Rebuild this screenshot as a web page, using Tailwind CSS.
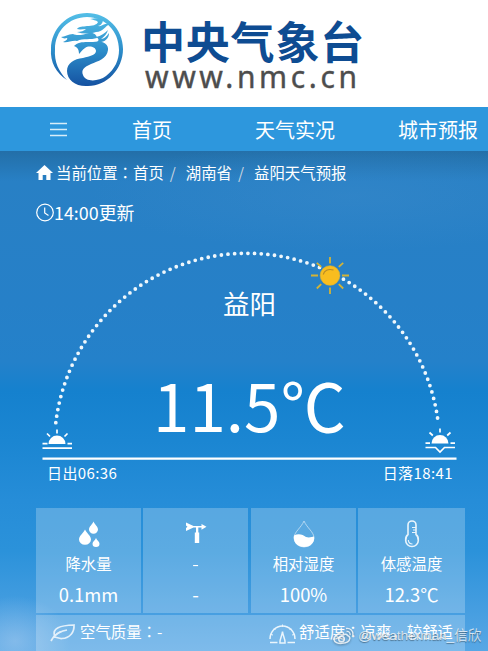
<!DOCTYPE html>
<html lang="zh-CN">
<head>
  <meta charset="UTF-8">
  <meta name="viewport" content="width=device-width, initial-scale=1.0">
  <title>益阳天气预报</title>
  <script src="https://cdn.jsdelivr.net/npm/@tailwindcss/browser@4"></script>
</head>
<body class="overflow-hidden">
  <div class="relative w-[488px] h-[651px] overflow-hidden bg-white text-white font-['Noto_Sans_CJK_SC',sans-serif]">
    <!-- Header -->
    <header class="flex h-[107px] pt-3 pl-[50px]">
      <svg class="w-[74px] h-[75px] shrink-0" viewBox="0 0 74 75">
        <defs>
          <linearGradient id="logo" gradientUnits="userSpaceOnUse" x1="0" y1="0" x2="0" y2="75">
            <stop offset="0" stop-color="#55c0e8" />
            <stop offset=".5" stop-color="#2d8fcb" />
            <stop offset="1" stop-color="#1450a0" />
          </linearGradient>
        </defs>
        <g fill="url(#logo)">
          <path d="M17 68C6 61 0 50 1 37C1 17 17 1 37 1C57 1 73 17 73 37C73 57 57 74 38 74C26 75 17 68 17 59C17 51 24 47 33 46C40 44 46 43 46 39C46 35 39 33 35 36C32 38 31 40 29 42C29 37 27 35 24 34C28 29 37 30 43 30C51 28 59 31 58 38C57 47 48 49 41 52C34 55 31 58 33 63C35 70 48 70 56 64C65 57 69 48 69 38C69 19 55 5 37 5C19 5 5 19 5 37C4 50 9 60 17 68Z" />
          <path d="M11 25C15 25 18 22 23 22C27 24 33 23 39 21C43 20 47 23 47 26C41 28 33 26 27 29C22 28 18 31 13 30C16 29 18 27 17 26C14 27 13 26 11 25Z" />
          <path d="M27 17C29 14 33 15 37 14C42 14 47 13 48 10C46 8 43 8 40 7C45 6 50 6 53 8C53 11 50 14 48 14C52 15 55 10 60 12C55 14 53 20 46 20C39 22 33 22 27 20C31 20 34 19 36 17C33 17 30 18 27 17Z" />
          <path d="M46 25C51 24 55 21 58 18C57 22 54 25 51 27C54 27 57 24 59 21C59 27 54 31 47 30C50 28 48 26 46 25Z" />
        </g>
      </svg>
      <div class="pl-[17px] pt-[5px]">
        <div class="h-11 text-[44px] leading-[46px] font-bold tracking-[0.8px] text-[#0e4c92] whitespace-nowrap">中央气象台</div>
        <div class="pt-px pl-1 font-['Noto_Sans'] text-[30px] leading-[30px] tracking-[3.6px] text-[#4d4d4d] [-webkit-text-stroke:0.4px_#4d4d4d] whitespace-nowrap">www.nmc.cn</div>
      </div>
    </header>

    <!-- Nav -->
    <nav class="flex h-11 items-center bg-[#2d97dd] pl-[50px] text-xl leading-[44px] whitespace-nowrap">
      <svg class="w-[17px] h-[15px]" viewBox="0 0 17 15" fill="none" stroke="#d8edf9" stroke-width="1.4">
        <path d="M0 1.5H17M0 7.5H17M0 13.5H17" />
      </svg>
      <a class="ml-[65px] pt-px">首页</a>
      <a class="ml-[83px] pt-px">天气实况</a>
      <a class="ml-[63px] pt-px">城市预报</a>
    </nav>

    <main class="h-[500px]">
      <div class="h-full bg-[radial-gradient(ellipse_55px_45px_at_15px_490px,#a7cbef90,transparent),radial-gradient(ellipse_260px_55px_at_350px_45px,#3a8acb70,transparent),linear-gradient(180deg,#236fa8_0%,#2880c5_6%,#2680c8_30%,#2481ca_42%,#1581ce_48%,#1b86d2_58%,#268dd8_70%,#2b92da_80%,#449de0_91%,#57a7e5_100%)] px-9">
        <!-- Breadcrumb -->
        <div class="flex h-[46px] items-center pb-0.5 text-[15.4px] whitespace-nowrap">
          <svg class="mb-px w-[17px] h-[15px]" viewBox="0 0 17 15" fill="#fff">
            <path d="M8.5 0L17 8H14.5V15H10.3V10H6.7V15H2.5V8H0Z" />
          </svg>
          <span class="ml-[3px]">当前位置<span lang="zh-TW" class="font-['Noto_Sans_CJK_TC']">：</span>首页</span>
          <span class="ml-1.5 text-[#c8d4e0]">/</span>
          <span class="ml-2.5">湖南省</span>
          <span class="ml-1.5 text-[#c8d4e0]">/</span>
          <span class="ml-2.5">益阳天气预报</span>
        </div>

        <!-- Update time -->
        <div class="flex h-8 items-center pb-px text-[17.9px] whitespace-nowrap">
          <svg class="w-[18px] h-[19px]" viewBox="0 0 18 19" fill="none" stroke="#fff" stroke-width="1.2">
            <circle cx="9" cy="9.5" r="8.3" />
            <path d="M8.7 4.5V10L12.5 12.5" />
          </svg>
          14:00更新
        </div>

        <!-- Sun track -->
        <div class="relative h-[279px]">
          <svg class="absolute -left-9 top-0 w-[488px] h-[279px]" viewBox="0 229 488 279" fill="none" stroke="#fff">
            <path d="M55.8 422.7A192.6 192.6 0 0 1 438.2 422.7" stroke="#eff7fc" stroke-width="3.8" stroke-linecap="round" stroke-dasharray="0 6.67" />
            <path d="M42.5 458.7H456.5" stroke-width="2.2" />
            <!-- Sunrise -->
            <g stroke-width="1.7">
              <path d="M48.5 444A8.5 8.5 0 0 1 65.5 444Z" fill="#fff" stroke="none" />
              <path d="M57 429.5V433.5M47 433.5L50 436.5M67.5 433.5L64.5 436.5M42.5 443.7H47.5M67.5 443.7H72M42.5 448.2H72" />
            </g>
            <!-- Sunset -->
            <g stroke-width="1.7">
              <path d="M431.5 443.5A8.5 8.5 0 0 1 448.5 443.5Z" fill="#fff" stroke="none" />
              <path d="M440 428.5V432.5M429.5 432.5L432.8 435.5M450.5 432.5L447.2 435.5M425.5 443.2H430M450.5 443.2H455M425.5 447.5H435.5L440 452L444.5 447.5H455" />
            </g>
            <!-- Sun -->
            <g stroke="#d3b336" stroke-width="1.8">
              <path d="M330 257V263.5M330 287.5V294M311 275.5H318M342 275.5H349M316.8 262.8L321.2 266.8M343.2 262.8L338.8 266.8M316.8 288.5L321.2 284.2M343.2 288.5L338.8 284.2" />
              <circle cx="330" cy="275.5" r="9.8" fill="#f8bd1f" stroke="#e0b42c" stroke-width=".6" />
              <path d="M323.3 274.5C324 270.5 328 268.5 333.5 270" stroke="#b3892a" stroke-width="1.2" />
            </g>
          </svg>
          <div class="relative flex flex-col items-center pt-[56px] pl-[11px]">
            <div class="text-[26.5px] leading-[36px]">益阳</div>
            <div class="mt-[43px] text-[65.5px] leading-[80px] whitespace-nowrap">11.5℃</div>
          </div>
          <div class="relative mt-[18px] flex w-[417px] justify-between pl-[11px] text-[15px] leading-[22px] whitespace-nowrap">
            <span class="tracking-[0.4px]">日出06:36</span>
            <span class="tracking-[0.4px]">日落18:41</span>
          </div>
        </div>

        <!-- Cards -->
        <div class="flex w-[429px] h-[105px] text-center text-[15.4px]">
          <div class="flex w-[105px] flex-col items-center bg-white/23 pt-3">
            <svg class="w-[22px] h-[28px]" viewBox="0 0 22 28" fill="#fff">
              <path d="M7 9.5C9 13.5 13 16 13 19.5A6 5.2 0 0 1 1 19.5C1 16 5 13.5 7 9.5ZM15.5 1.5C17 5 20 6.5 20 9.5A4.5 4.2 0 0 1 11 9.5C11 6.5 14 5 15.5 1.5ZM18 18C19 20.5 21.5 21.5 21.5 23.7A3.5 3.2 0 0 1 14.5 23.7C14.5 21.5 17 20.5 18 18Z" />
            </svg>
            <div class="mt-[3px] leading-6">降水量</div>
            <div class="mt-[5px] text-[18.4px] leading-7">0.1mm</div>
          </div>
          <div class="ml-0.5 flex w-[105px] flex-col items-center bg-white/23 pt-3">
            <svg class="w-[22px] h-[28px]" viewBox="0 0 22 28" fill="#fff">
              <path d="M1 2.5L8.5 6H16.5V4L21.5 6.8L16.5 9.8V7.6H8.5L1 11V8L2.5 6.8L1 5.5ZM11 7H13.3V12.5H14.2V23H9.8V12.5H11Z" />
            </svg>
            <div class="mt-[3px] leading-6 scale-x-125">-</div>
            <div class="mt-[5px] text-[19px] leading-7">-</div>
          </div>
          <div class="ml-[3px] flex w-[105px] flex-col items-center bg-white/23 pt-3">
            <svg class="w-[22px] h-[28px]" viewBox="0 0 22 28">
              <path d="M11 1C14 8 21 12 21 18A10 9 0 0 1 1 18C1 12 8 8 11 1Z" fill="none" stroke="#b5d8f2" stroke-width="1" />
              <path d="M1 15.5C6 13 10 15 13 17C16 18 19 17 21 16.5C22 22 18 27 11 27C4 27 0 22 1 15.5Z" fill="#fff" />
            </svg>
            <div class="mt-[3px] leading-6">相对湿度</div>
            <div class="mt-[5px] text-[18.4px] leading-7">100%</div>
          </div>
          <div class="ml-0.5 flex w-[107px] flex-col items-center bg-white/23 pt-3">
            <svg class="w-[22px] h-[28px]" viewBox="0 0 22 28" fill="none" stroke="#eaf5fc" stroke-width="1.6">
              <path d="M7 14.5V5A4 4 0 0 1 15 5V14.5C17 16 17.5 18 17.3 20.5A6.3 6 0 0 1 4.7 20.5C4.5 18 5 16 7 14.5Z" />
              <path d="M11 7.5H15M12 10H15M11 12.5H15M7.3 20C7.5 22.5 9 24 11.5 24" stroke-width="1.1" />
            </svg>
            <div class="mt-[3px] leading-6">体感温度</div>
            <div class="mt-[5px] text-[18.4px] leading-7">12.3℃</div>
          </div>
        </div>

        <div class="mt-0.5 flex w-[429px] h-9 items-center bg-white/23 text-[15.4px] whitespace-nowrap">
          <svg class="ml-3.5 w-[26px] h-[20px]" viewBox="0 0 26 20" fill="none" stroke="#e3f0fa" stroke-width="1.7">
            <path d="M1 18C3 14 6 10.5 11 8.5M4.5 13C2 5 10 2.5 24 2C24.5 9 20 15 12 15.5C9 16 7 14 4 14" />
            <path d="M4 14C7 10 11 8 17 7" />
          </svg>
          <span class="ml-1 w-[84px] pb-0.5">空气质量<span lang="zh-TW" class="font-['Noto_Sans_CJK_TC']">：</span>-</span>
          <svg class="ml-[105px] w-[27px] h-[21px]" viewBox="0 0 27 21" fill="none" stroke="#eaf5fc" stroke-width="1.5">
            <path d="M1 16A12.5 13 0 0 1 26 16M1 19.5H8.5M18.5 19.5H26" />
            <path d="M13.5 1.5V4M5 5.5L6.5 7M22 5.5L20.5 7M2 11.5L4 12M25 11.5L23 12" stroke-width="1" />
            <path d="M13.5 8.5C14 13 16 16 16 18.5V20H11V18.5C11 16 13 13 13.5 8.5Z" />
          </svg>
          <span class="ml-[3px] pb-0.5">舒适度<span lang="zh-TW" class="font-['Noto_Sans_CJK_TC']">：</span>凉爽，较舒适</span>
        </div>
      </div>
    </main>

    <!-- Watermark -->
    <div class="absolute left-[333px] top-[626px] flex items-center leading-5 text-white/75 [text-shadow:0_1px_1px_#0006] whitespace-nowrap">
      <svg class="w-[21px] h-[18px] drop-shadow-[0_1px_1px_#0006]" viewBox="0 0 21 18" fill="none" stroke="#ffffffcc" stroke-width="1.6">
        <path d="M14.5 8.5C14 7 12 7 10.5 7.8C11 5 9 4.5 6.5 6C3 8 .8 10.5 1 12.5C1.5 18 16 17.5 16.8 11.5C17 10 16 9 14.5 8.5Z" />
        <circle cx="8.5" cy="12" r="2.8" />
        <path d="M13.5 4.5C15.5 4 17.5 5.5 17 8M13 1.5C17 .5 20.8 4 19.7 8.5" stroke-width="1.3" />
      </svg>
      <span class="ml-1 font-['Liberation_Sans','Noto_Sans_CJK_SC',sans-serif] text-[13.6px]">@weatherman_信欣</span>
    </div>
  </div>
</body>
</html>
